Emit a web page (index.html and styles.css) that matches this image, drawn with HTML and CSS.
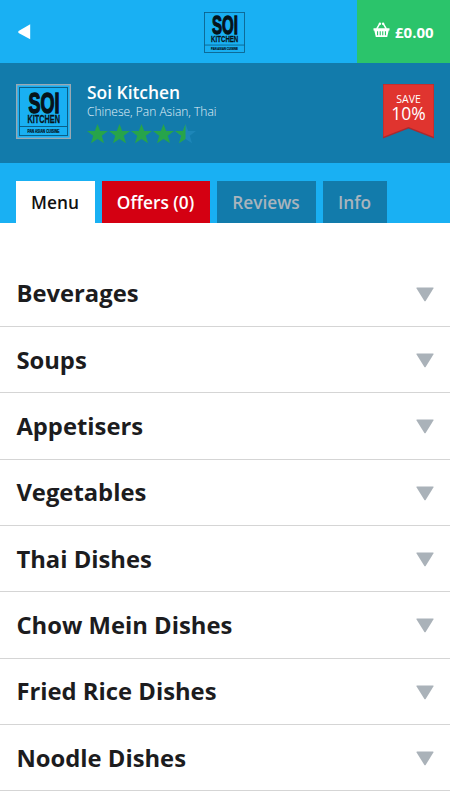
FILE: index.html
```html
<!DOCTYPE html>
<html lang="en">
<head>
<meta charset="utf-8">
<title>Soi Kitchen</title>
<link rel="stylesheet" href="styles.css">
</head>
<body>
<header class="topbar">
  <svg class="back" viewBox="0 0 13 16"><path d="M12.2.3v15L.6 9Q-.4 8 .6 7z"/></svg>
  <svg class="brand" viewBox="3 3 49 49">
    <rect class="line" x="3.6" y="3.6" width="47.8" height="47.8"/>
    <path class="line" d="M3.6 42.5h47.8"/>
    <text class="soi" x="12.5" y="28.8" textLength="31" lengthAdjust="spacingAndGlyphs">SOI</text>
    <text class="kitchen" x="11.5" y="39" textLength="32.5" lengthAdjust="spacingAndGlyphs">KITCHEN</text>
    <text class="cuisine" x="11.5" y="49" textLength="32" lengthAdjust="spacingAndGlyphs">PAN ASIAN CUISINE</text>
  </svg>
  <div class="basket">
    <svg viewBox="0 0 17 16"><path class="handle" d="M3.7 6.8 6.9 1.4M13.3 6.8 10.1 1.4"/><path fill-rule="evenodd" d="M.5 6.2h16v2.3h-.8l-1.5 6.4H2.8L1.3 8.5H.5zM4 9.2v4h1.1v-4zM6.7 9.2v4h1.1v-4zM9.2 9.2v4h1.1v-4zM11.9 9.2v4H13v-4z"/><circle cx="6.9" cy="1.7" r="1.2"/><circle cx="10.1" cy="1.7" r="1.2"/></svg>
    <span>£0.00</span>
  </div>
</header>
<section class="hero">
  <svg class="logo" viewBox="0 0 55 55">
    <rect class="frame" x=".7" y=".7" width="53.6" height="53.6"/>
    <rect class="line" x="3.5" y="3.5" width="48" height="48"/>
    <path class="line" d="M3.5 42.5h48"/>
    <text class="soi" x="12.5" y="28.8" textLength="31" lengthAdjust="spacingAndGlyphs">SOI</text>
    <text class="kitchen" x="11.5" y="39" textLength="32.5" lengthAdjust="spacingAndGlyphs">KITCHEN</text>
    <text class="cuisine" x="11.5" y="49" textLength="32" lengthAdjust="spacingAndGlyphs">PAN ASIAN CUISINE</text>
  </svg>
  <div class="info">
    <h1>Soi Kitchen</h1>
    <p>Chinese, Pan Asian, Thai</p>
    <svg class="stars" viewBox="0 0 110 20">
      <defs>
        <path id="star" d="M10.5 0 13.2 7H21l-6.2 4.700L17 19.200 10.500 14.900 4 19.200l2.200-7.500L0 7h7.800z"/>
        <clipPath id="half"><path d="M0 0h10.500v20H0z"/></clipPath>
      </defs>
      <use href="#star"/><use href="#star" x="22"/><use href="#star" x="44"/><use href="#star" x="66"/>
      <use href="#star" x="88" class="empty"/>
      <g transform="translate(88)"><use href="#star" clip-path="url(#half)"/></g>
    </svg>
  </div>
  <div class="ribbon">
    <svg viewBox="0 0 51 55"><path class="edge" d="M0 0h51v54.500L25.500 44.500 0 54.500z"/><path class="face" d="M.5.500h50v52.300L25.500 43 .5 52.800z"/></svg>
    <div class="deal"><span class="save">SAVE</span><span class="pct">10%</span></div>
  </div>
</section>
<nav class="tabs">
  <a class="tab menu">Menu</a>
  <a class="tab offers">Offers (0)</a>
  <a class="tab reviews">Reviews</a>
  <a class="tab about">Info</a>
</nav>
<svg class="defs"><path id="arrow" d="M1 .5h16q1 0 .4 1L9.800 13.700q-.8 1.100-1.600 0L.6 1.500Q0 .5 1 .5z"/></svg>
<ul class="list">
  <li><span>Beverages</span><svg viewBox="0 0 18 15"><use href="#arrow"/></svg></li>
  <li><span>Soups</span><svg viewBox="0 0 18 15"><use href="#arrow"/></svg></li>
  <li><span>Appetisers</span><svg viewBox="0 0 18 15"><use href="#arrow"/></svg></li>
  <li><span>Vegetables</span><svg viewBox="0 0 18 15"><use href="#arrow"/></svg></li>
  <li><span>Thai Dishes</span><svg viewBox="0 0 18 15"><use href="#arrow"/></svg></li>
  <li><span>Chow Mein Dishes</span><svg viewBox="0 0 18 15"><use href="#arrow"/></svg></li>
  <li><span>Fried Rice Dishes</span><svg viewBox="0 0 18 15"><use href="#arrow"/></svg></li>
  <li><span>Noodle Dishes</span><svg viewBox="0 0 18 15"><use href="#arrow"/></svg></li>
</ul>
</body>
</html>
```
FILE: styles.css
```css
* { box-sizing: border-box; }
body {
  margin: 0;
  height: 800px;
  overflow: hidden;
  background: #fff;
  font-family: "Open Sans", "Noto Sans", sans-serif;
}
svg { display: block; flex: none; overflow: visible; }
.defs { width: 0; height: 0; overflow: hidden; }
.topbar {
  height: 63px;
  background: #19b0f3;
  display: grid;
  grid-template-columns: 93px 1fr 93px;
}
.back {
  width: 13px;
  height: 16px;
  margin: 24px 0 0 18px;
  fill: #fff;
}
.brand {
  width: 41px;
  height: 41px;
  margin: 12px 0 0 111px;
}
.line { fill: none; stroke: #0b5f88; stroke-width: 1; }
.frame { fill: #19b0f3; stroke: #9aa9b3; stroke-width: 1.4; }
.soi, .kitchen, .cuisine {
  font-family: "Liberation Sans", sans-serif;
  font-weight: 700;
  fill: #06131a;
  stroke: #06131a;
}
.soi { font-size: 30px; stroke-width: 1.5; }
.kitchen { font-size: 11.5px; stroke-width: .3; }
.cuisine { font-size: 4.5px; stroke-width: .2; }
.basket {
  background: #2bc46b;
  color: #fff;
  display: flex;
  align-items: center;
  gap: 5px;
  padding: 1px 0 0 16px;
  font-size: 15px;
  font-weight: 700;
}
.basket svg { width: 17px; height: 16px; fill: #fff; margin-top: -5px; }
.handle { fill: none; stroke: #fff; stroke-width: 1.5; }
.hero {
  height: 100px;
  background: #127bab;
  display: flex;
  align-items: flex-start;
  padding: 21px 16px 0;
}
.logo { width: 55px; height: 55px; }
.info { flex: 1; padding-left: 16px; color: #fff; }
.info h1 {
  margin: -4px 0 0;
  font-size: 17.4px;
  line-height: 24px;
  font-weight: 600;
}
.info p {
  margin: -1px 0 0;
  font-size: 12px;
  line-height: 18px;
  font-weight: 300;
  color: #e2f2fa;
}
.stars { width: 110px; height: 20px; margin-top: 3px; fill: #27a44a; }
.empty { fill: #1d86b8; }
.ribbon { display: grid; }
.ribbon > * { grid-area: 1 / 1; }
.ribbon svg { width: 51px; height: 55px; }
.edge { fill: #a92a30; }
.face { fill: #e0342f; }
.deal {
  display: flex;
  flex-direction: column;
  align-items: center;
  color: #fff;
  padding-top: 8px;
  z-index: 1;
}
.save { font-size: 10.5px; line-height: 14px; }
.pct { font-size: 17.5px; line-height: 14px; }
.tabs {
  height: 60px;
  background: #19b0f3;
  display: flex;
  align-items: flex-end;
  gap: 7px;
  padding-left: 16px;
}
.tab {
  height: 42px;
  line-height: 43px;
  padding-right: 1px;
  text-align: center;
  font-size: 17.3px;
  font-weight: 600;
}
.menu { width: 79px; background: #fff; color: #111; }
.offers { width: 108px; background: #d40012; color: #fff; }
.reviews { width: 99px; background: #127bab; color: #a9b4bd; }
.about { width: 64px; background: #127bab; color: #a9b4bd; }
.list { margin: 0; padding: 37.6px 0 0; list-style: none; }
.list li {
  height: 66.35px;
  border-bottom: 1px solid #d5d5d5;
  display: flex;
  align-items: center;
  justify-content: space-between;
  padding: 0 16px 0 16.4px;
  font-size: 23.8px;
  font-weight: 700;
  color: #1c1c1e;
}
.list svg { width: 18px; height: 15px; fill: #aab2b9; margin-top: 2px; }
```
